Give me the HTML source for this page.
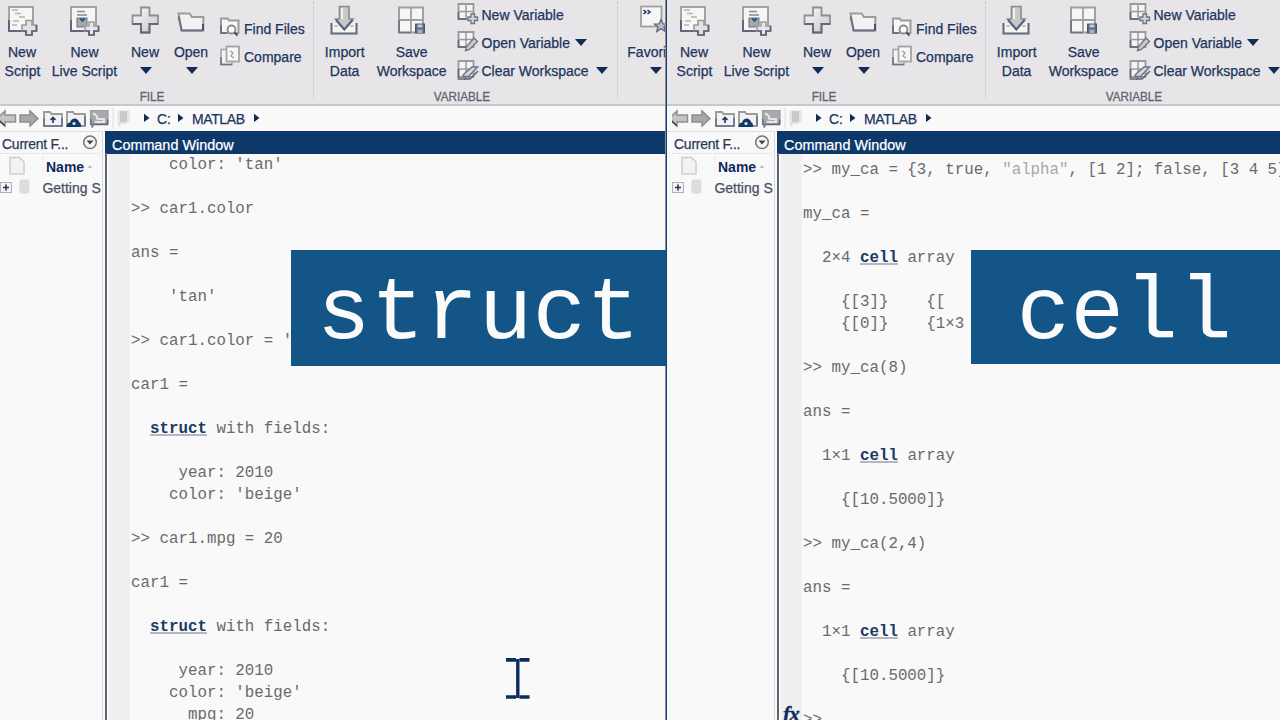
<!DOCTYPE html>
<html><head><meta charset="utf-8">
<style>
*{margin:0;padding:0;box-sizing:border-box}
html,body{width:1280px;height:720px;overflow:hidden;background:#f9f9f9}
body{position:relative;font-family:"Liberation Sans",sans-serif}
.clip{position:absolute;top:0;height:720px;overflow:hidden}
.win{position:absolute;top:0;left:0;width:680px;height:720px}
.a{position:absolute;white-space:nowrap}
.rib{position:absolute;left:-10px;top:0;width:700px;height:104px;background:#e7e5e7}
.ribline{position:absolute;left:-10px;top:104px;width:700px;height:2px;background:#c8c8ca}
.path{position:absolute;left:-10px;top:106px;width:700px;height:25px;background:#f9f9f9}
.lbl{position:absolute;font-size:14px;color:#1c355e;white-space:nowrap;line-height:16px;-webkit-text-stroke:0.25px currentColor}
.c{transform:translateX(-50%)}
.tri{position:absolute;width:0;height:0;border-left:6px solid transparent;border-right:6px solid transparent;border-top:7px solid #0f2d5a}
.grp{position:absolute;font-size:13px;color:#5e6470;line-height:13px;-webkit-text-stroke:0.3px currentColor;transform:translateX(-50%) scaleX(0.9)}
.vsep{position:absolute;top:2px;width:1px;height:98px;border-left:1px dotted #c4c4c4}
.cf{position:absolute;left:-10px;top:131px;width:113px;height:600px;background:#f9f9f9;border-right:1px solid #d8d8d8;border-top:1px solid #e0e0e0}
.cfline{position:absolute;left:0;top:153px;width:100px;height:1px;border-top:1px dotted #d4d4d4}
.cwhdr{position:absolute;left:105px;top:131px;width:575px;height:22.5px;background:#0d386a}
.cwbody{position:absolute;left:105px;top:153px;width:575px;height:580px;background:#f9f9f9}
.gutter{position:absolute;left:109px;top:153px;width:21px;height:580px;background:#efefef}
.cwborder{position:absolute;left:105px;top:153px;width:2px;height:600px;background:#5c6474}
.code{position:absolute;left:131.1px;font-family:"Liberation Mono",monospace;font-size:15.8px;color:#6a6a6a;white-space:pre;line-height:22px}
.kw{color:#1b3a66;font-weight:bold;text-decoration:underline solid #b4b7c0;text-decoration-thickness:1.5px;text-underline-offset:1px}
.ov{position:absolute;background:#135587;color:#fbfbfb;font-family:"Liberation Mono",monospace;font-size:89px;line-height:129px;text-align:center;letter-spacing:0.5px;text-indent:0.5px}
</style></head><body>

<!-- LEFT WINDOW -->
<div class="clip" style="left:0;width:665px">
 <div class="win" id="w1" style="left:0">
  <div class="rib"></div><div class="ribline"></div><div class="path"></div>
  <!-- ribbon labels -->
  <div class="lbl c" style="left:22px;top:44px">New</div>
  <div class="lbl c" style="left:22.5px;top:63px">Script</div>
  <div class="lbl c" style="left:84.5px;top:44px">New</div>
  <div class="lbl c" style="left:84.5px;top:63px">Live Script</div>
  <div class="lbl c" style="left:145px;top:44px">New</div>
  <div class="tri" style="left:139.5px;top:66.5px"></div>
  <div class="lbl c" style="left:191px;top:44px">Open</div>
  <div class="tri" style="left:185.5px;top:66.5px"></div>
  <div class="lbl" style="left:244px;top:21px">Find Files</div>
  <div class="lbl" style="left:244px;top:49px">Compare</div>
  <div class="grp" style="left:152px;top:89.5px">FILE</div>
  <div class="vsep" style="left:313px"></div>
  <div class="lbl c" style="left:344.7px;top:44px">Import</div>
  <div class="lbl c" style="left:344.6px;top:63px">Data</div>
  <div class="lbl c" style="left:411.7px;top:44px">Save</div>
  <div class="lbl c" style="left:411.6px;top:63px">Workspace</div>
  <div class="lbl" style="left:481.5px;top:7px">New Variable</div>
  <div class="lbl" style="left:481.5px;top:34.8px">Open Variable</div>
  <div class="tri" style="left:575px;top:38.5px"></div>
  <div class="lbl" style="left:481.5px;top:63px">Clear Workspace</div>
  <div class="tri" style="left:595.5px;top:66.5px"></div>
  <div class="grp" style="left:462px;top:89.5px">VARIABLE</div>
  <div class="vsep" style="left:617px"></div>
  <div class="lbl" style="left:627.3px;top:44px">Favorites</div>
  <div class="tri" style="left:649.5px;top:66.5px"></div>

  <!-- path bar -->
  <div class="lbl" style="left:157px;top:110.5px;font-size:14px">C:</div>
  <div class="lbl" style="left:192px;top:110.5px;font-size:14px;letter-spacing:-0.4px">MATLAB</div>

  <!-- current folder -->
  <div class="cf"></div>
  <div class="cfline"></div>
  <div class="lbl" style="left:2px;top:135.5px;font-size:14px;letter-spacing:-0.25px;color:#2a3a55">Current F...</div>
  <div class="lbl" style="left:46px;top:159px;font-weight:bold;font-size:14px;color:#10285a;-webkit-text-stroke:0">Name</div>
  <div class="lbl" style="left:42.4px;top:180px;color:#475066">Getting S</div>

  <!-- command window -->
  <div class="cwbody"></div>
  <div class="gutter"></div>
  <div class="cwhdr"></div>
  <div class="cwborder"></div>
  <div class="lbl" style="left:112px;top:136.5px;font-size:14.4px;color:#fff">Command Window</div>

  <svg class="ico" width="700" height="200" viewBox="0 0 700 200" style="position:absolute;left:0;top:0">
   <defs>
    <linearGradient id="gp" x1="0" y1="0" x2="1" y2="1"><stop offset="0" stop-color="#fafafa"/><stop offset="1" stop-color="#c8c8c8"/></linearGradient>
   </defs>
   <!-- New Script -->
   <rect x="9" y="7" width="24" height="24" fill="#f6f6f6" stroke="#a4a4a4" stroke-width="2"/>
   <path d="M9 20V31H22" fill="none" stroke="#5e687c" stroke-width="2"/>
   <path d="M12 10h6M15 13.5h6M19 17h6M13 21h6M12 25h5" stroke="#b4b4b4" stroke-width="1.5"/>
   <path d="M26 20.5h6v4.5h4.5v6h-4.5v4h-6v-4h-4v-6h4z" fill="#e2e2e2" stroke="#9a9a9a" stroke-width="1.6"/><path d="M36.5 25V31H32V35H26V31H22" fill="none" stroke="#56607a" stroke-width="1.7"/>
   <!-- New Live Script -->
   <rect x="71" y="7" width="25" height="24" fill="#f6f6f6" stroke="#a4a4a4" stroke-width="2"/>
   <path d="M71 20V31H84" fill="none" stroke="#5e687c" stroke-width="2"/>
   <path d="M77 11.5h8M77 15h10" stroke="#8a8a8a" stroke-width="1.5"/>
   <rect x="77" y="18" width="10" height="9" fill="#a8a8a8" stroke="#6a7284" stroke-width="1"/>
   <path d="M80 18.5l2.5 2.5l2.5-2.5" fill="#1a5a9a" stroke="#1a5a9a" stroke-width="1.6"/>
   <path d="M89 22h5v4h4.5v5h-4.5v4h-5v-4h-4v-5h4z" fill="#e6e6e6" stroke="#a0a0a0" stroke-width="1.6"/><path d="M98.5 26V31H94V35H89V31H85" fill="none" stroke="#56607a" stroke-width="1.7"/>
   <!-- New plus -->
   <path d="M141 7.5h8.5v8h8.5v8.5h-8.5v8.5h-8.5v-8.5h-8.5v-8.5h8.5z" fill="url(#gp)" stroke="#8e8e8e" stroke-width="1.8"/>
   <path d="M132.5 24h8.5v8.5h8.5V24h8.5" fill="none" stroke="#5e687c" stroke-width="1.8"/>
   <!-- Open folder -->
   <path d="M178.5 13.5h11l2.5 3.5h11.3v13.5h-21.5z" fill="#f2f2f2" stroke="#9c9c9c" stroke-width="2"/>
   <path d="M178.5 16.5l3 14h21.8" fill="none" stroke="#6b7386" stroke-width="1.8"/>
   <path d="M203 24v6" stroke="#1c3a6a" stroke-width="1.5"/>
   <!-- Find Files -->
   <path d="M221 18.5h6.5l1.5 2h9.5v12.5h-17.5z" fill="#f6f6f6" stroke="#9c9c9c" stroke-width="2"/>
   <path d="M221 25v8h6" fill="none" stroke="#6b7386" stroke-width="1.8"/>
   <circle cx="231.5" cy="29.5" r="4" fill="#fafafa" stroke="#8a8a8a" stroke-width="1.8"/>
   <path d="M234.5 32.5l3 3" stroke="#3a4a6a" stroke-width="2"/>
   <!-- Compare -->
   <rect x="221" y="49.5" width="11" height="15" fill="#f4f4f4" stroke="#a8a8a8" stroke-width="1.6"/>
   <path d="M221 57v7.5h11" fill="none" stroke="#6b7386" stroke-width="1.6"/>
   <rect x="226.5" y="46.5" width="12.5" height="15" fill="#f6f6f6" stroke="#a4a4a4" stroke-width="1.8"/>
   <path d="M230 51l3 2-2 3 3 2" fill="none" stroke="#9a9a9a" stroke-width="1.2"/>
   <!-- Import -->
   <path d="M331.5 23v10.5h25v-10.5" fill="#f4f4f4" stroke="#5e687c" stroke-width="2"/>
   <path d="M334 26h4M350 26h4" stroke="#c4c4c4" stroke-width="2"/>
   <path d="M339.5 6.5h9.5v12.5h4l-8.7 10.5l-8.7-10.5h3.9z" fill="#c8c8c8" stroke="#8a8a8a" stroke-width="1.6"/>
   <path d="M336 20l8.3 9.5l8.3-9.5" fill="none" stroke="#56607a" stroke-width="2"/>
   <path d="M342 8v11" stroke="#f2f2f2" stroke-width="2"/>
   <!-- Save Workspace -->
   <path d="M399 7.5h24v25h-24z" fill="#f6f6f6" stroke="#a0a0a0" stroke-width="2"/>
   <path d="M411 7.5v25M399 20h24" stroke="#a0a0a0" stroke-width="1.8"/>
   <path d="M399 20v12.5h12" fill="none" stroke="#6b7386" stroke-width="1.6"/>
   <rect x="415.5" y="24" width="9" height="9" fill="#5e687c" stroke="#4a5670" stroke-width="1"/>
   <rect x="417.5" y="24.5" width="5" height="3" fill="#c8c8c8"/>
   <rect x="417.5" y="29.5" width="5" height="3.5" fill="#a8b0c0"/>
   <!-- New Variable -->
   <path d="M458.5 4h15v15h-15z" fill="#f4f4f4" stroke="#9a9a9a" stroke-width="1.8"/>
   <path d="M466 4v15M458.5 11.5h15" stroke="#9a9a9a" stroke-width="1.5"/>
   <path d="M458.5 12v7h8" fill="none" stroke="#5e687c" stroke-width="1.6"/>
   <path d="M471 14h3.5v3h3v3.5h-3v3h-3.5v-3h-3v-3.5h3z" fill="#d4d4d4" stroke="#6b7386" stroke-width="1.3"/>
   <!-- Open Variable -->
   <path d="M458.5 32h15v15h-15z" fill="#f4f4f4" stroke="#9a9a9a" stroke-width="1.8"/>
   <path d="M466 32v15M458.5 39.5h15" stroke="#9a9a9a" stroke-width="1.5"/>
   <path d="M458.5 40v7h8" fill="none" stroke="#5e687c" stroke-width="1.6"/>
   <path d="M474 38l3.5 3.5l-8 8l-4 1l1-4z" fill="#c8c8c8" stroke="#6b7386" stroke-width="1.3"/>
   <!-- Clear Workspace -->
   <path d="M458.5 61h15v16h-15z" fill="#f4f4f4" stroke="#9a9a9a" stroke-width="1.8"/>
   <path d="M466 61v16M458.5 69h15" stroke="#9a9a9a" stroke-width="1.5"/>
   <path d="M458.5 69v10h8" fill="none" stroke="#5e687c" stroke-width="1.6"/>
   <path d="M463 75l9-8h5.5l-9 9.5h-5.5z" fill="#dadada" stroke="#6b7386" stroke-width="1.5"/>
   <path d="M464 79h6l8-8" fill="none" stroke="#5e687c" stroke-width="1.6"/>
   <!-- Favorites -->
   <rect x="641" y="6.5" width="20.5" height="20" fill="#f6f6f6" stroke="#a0a0a0" stroke-width="1.8"/>
   <path d="M643.5 10l2.5 2-2.5 2M647.5 10l2.5 2-2.5 2" fill="none" stroke="#1b3566" stroke-width="1.6"/>
   <path d="M661 19.5l2 4.5h4.5l-3.5 3l1.3 4.5l-4.3-2.8l-4.3 2.8l1.3-4.5l-3.5-3h4.5z" fill="#bdbdbd" stroke="#56607a" stroke-width="1.2"/>

   <!-- path bar icons -->
   <path d="M-3 118.5l8-7.5v4h10.5v7h-10.5v4z" fill="#c4c4c4" stroke="#8e8e8e" stroke-width="1.5"/>
   <path d="M-2 119.5l7 6.5" stroke="#3a4a6a" stroke-width="1.5"/>
   <path d="M38 118.5l-8-7.5v4h-10v7h10v4z" fill="#a8a8a8" stroke="#8e8e8e" stroke-width="1.5"/>
   <path d="M44 112h6l1.5 2h10.5v12h-18z" fill="#f2f2f2" stroke="#9a9a9a" stroke-width="1.8"/>
   <path d="M44 118v8h18v-8" fill="none" stroke="#6b7386" stroke-width="1.6"/>
   <path d="M53 123v-5M50.5 120l2.5-2.5l2.5 2.5" fill="none" stroke="#1b3a6a" stroke-width="1.6"/>
   <path d="M67 112h6l1.5 2h10.5v12h-18z" fill="#f2f2f2" stroke="#9a9a9a" stroke-width="1.8"/>
   <path d="M85 116v10" stroke="#6b7386" stroke-width="1.6"/>
   <path d="M66.5 127c0-2.8 1.3-4.3 3.5-4.5c0.8-2.6 2.6-4 4.8-4c2.3 0 3.8 1.8 4.3 3.8c1.5 0.3 2 2 2 4.7z" fill="#0f3a6e"/>
   <circle cx="74" cy="123.5" r="1.6" fill="#e8e8e8"/>
   <path d="M90.5 110.5h17.5v13.5h-17.5z" fill="#a9a9a9" stroke="#9c9c9c" stroke-width="1.2"/>
   <path d="M93 113.5c2.5 0.5 4 2.5 4.5 5.5h6.5v3h-9" fill="none" stroke="#e6e6e6" stroke-width="2.2"/>
   <path d="M91 119v5.5h16.5v-5" fill="none" stroke="#5e687c" stroke-width="1.4"/>
   <path d="M93 124l-1 3.5" stroke="#6a7284" stroke-width="2"/>
   <rect x="112.5" y="108" width="1.2" height="21" fill="#e0e0e0"/>
   <path d="M117.5 110.5h12v11.5l-3 2h-6l-3-2z" fill="#e4e4e4"/><path d="M120 111h7v11h-7z" fill="#c8c8c8"/><path d="M118 123l2.5 3.5" stroke="#dcdcdc" stroke-width="1.5"/>
   <path d="M144 113.8l5.5 4.1l-5.5 4.1z" fill="#0f2a55"/>
   <path d="M178 113.8l5.5 4.1l-5.5 4.1z" fill="#0f2a55"/>
   <path d="M254 113.8l5.5 4.1l-5.5 4.1z" fill="#0f2a55"/>

   <!-- current folder icons -->
   <circle cx="90" cy="142.3" r="6.3" fill="#f8f8f8" stroke="#777" stroke-width="1.5"/>
   <path d="M86.5 140.5h7l-3.5 4z" fill="#3a4560"/>
   <path d="M10 157.5h9.5l4.5 4.5v12h-14z" fill="#f2f2f2" stroke="#d0d0d0" stroke-width="1.6"/>
   <rect x="0.5" y="182.5" width="11" height="10" fill="#f4f4f4" stroke="#b0b0b0" stroke-width="1"/>
   <path d="M3 187.5h6M6 184.5v6" stroke="#1b3566" stroke-width="1.6"/>
   <rect x="19.5" y="179.5" width="10" height="14" rx="2" fill="#dcdcdc"/>
   <path d="M87.5 168l2.5-3l2.5 3z" fill="#c0c0c0"/>
   <path d="M43 155v18" stroke="#e2e2e2" stroke-width="1" stroke-dasharray="1 1"/>
  </svg>
</div>
</div>

<div class="a" style="left:665px;top:0;width:2px;height:720px;background:linear-gradient(90deg,#8a909a 0 50%,#133f72 50%)"></div>

<!-- RIGHT WINDOW -->
<div class="clip" style="left:667px;width:613px">
 <div class="win" id="w2" style="left:5px">
  <div class="rib"></div><div class="ribline"></div><div class="path"></div>
  <!-- ribbon labels -->
  <div class="lbl c" style="left:22px;top:44px">New</div>
  <div class="lbl c" style="left:22.5px;top:63px">Script</div>
  <div class="lbl c" style="left:84.5px;top:44px">New</div>
  <div class="lbl c" style="left:84.5px;top:63px">Live Script</div>
  <div class="lbl c" style="left:145px;top:44px">New</div>
  <div class="tri" style="left:139.5px;top:66.5px"></div>
  <div class="lbl c" style="left:191px;top:44px">Open</div>
  <div class="tri" style="left:185.5px;top:66.5px"></div>
  <div class="lbl" style="left:244px;top:21px">Find Files</div>
  <div class="lbl" style="left:244px;top:49px">Compare</div>
  <div class="grp" style="left:152px;top:89.5px">FILE</div>
  <div class="vsep" style="left:313px"></div>
  <div class="lbl c" style="left:344.7px;top:44px">Import</div>
  <div class="lbl c" style="left:344.6px;top:63px">Data</div>
  <div class="lbl c" style="left:411.7px;top:44px">Save</div>
  <div class="lbl c" style="left:411.6px;top:63px">Workspace</div>
  <div class="lbl" style="left:481.5px;top:7px">New Variable</div>
  <div class="lbl" style="left:481.5px;top:34.8px">Open Variable</div>
  <div class="tri" style="left:575px;top:38.5px"></div>
  <div class="lbl" style="left:481.5px;top:63px">Clear Workspace</div>
  <div class="tri" style="left:595.5px;top:66.5px"></div>
  <div class="grp" style="left:462px;top:89.5px">VARIABLE</div>
  <div class="vsep" style="left:617px"></div>
  <div class="lbl" style="left:627.3px;top:44px">Favorites</div>
  <div class="tri" style="left:649.5px;top:66.5px"></div>

  <!-- path bar -->
  <div class="lbl" style="left:157px;top:110.5px;font-size:14px">C:</div>
  <div class="lbl" style="left:192px;top:110.5px;font-size:14px;letter-spacing:-0.4px">MATLAB</div>

  <!-- current folder -->
  <div class="cf"></div>
  <div class="cfline"></div>
  <div class="lbl" style="left:2px;top:135.5px;font-size:14px;letter-spacing:-0.25px;color:#2a3a55">Current F...</div>
  <div class="lbl" style="left:46px;top:159px;font-weight:bold;font-size:14px;color:#10285a;-webkit-text-stroke:0">Name</div>
  <div class="lbl" style="left:42.4px;top:180px;color:#475066">Getting S</div>

  <!-- command window -->
  <div class="cwbody"></div>
  <div class="gutter"></div>
  <div class="cwhdr"></div>
  <div class="cwborder"></div>
  <div class="lbl" style="left:112px;top:136.5px;font-size:14.4px;color:#fff">Command Window</div>

  <svg class="ico" width="700" height="200" viewBox="0 0 700 200" style="position:absolute;left:0;top:0">
   <defs>
    <linearGradient id="gp" x1="0" y1="0" x2="1" y2="1"><stop offset="0" stop-color="#fafafa"/><stop offset="1" stop-color="#c8c8c8"/></linearGradient>
   </defs>
   <!-- New Script -->
   <rect x="9" y="7" width="24" height="24" fill="#f6f6f6" stroke="#a4a4a4" stroke-width="2"/>
   <path d="M9 20V31H22" fill="none" stroke="#5e687c" stroke-width="2"/>
   <path d="M12 10h6M15 13.5h6M19 17h6M13 21h6M12 25h5" stroke="#b4b4b4" stroke-width="1.5"/>
   <path d="M26 20.5h6v4.5h4.5v6h-4.5v4h-6v-4h-4v-6h4z" fill="#e2e2e2" stroke="#9a9a9a" stroke-width="1.6"/><path d="M36.5 25V31H32V35H26V31H22" fill="none" stroke="#56607a" stroke-width="1.7"/>
   <!-- New Live Script -->
   <rect x="71" y="7" width="25" height="24" fill="#f6f6f6" stroke="#a4a4a4" stroke-width="2"/>
   <path d="M71 20V31H84" fill="none" stroke="#5e687c" stroke-width="2"/>
   <path d="M77 11.5h8M77 15h10" stroke="#8a8a8a" stroke-width="1.5"/>
   <rect x="77" y="18" width="10" height="9" fill="#a8a8a8" stroke="#6a7284" stroke-width="1"/>
   <path d="M80 18.5l2.5 2.5l2.5-2.5" fill="#1a5a9a" stroke="#1a5a9a" stroke-width="1.6"/>
   <path d="M89 22h5v4h4.5v5h-4.5v4h-5v-4h-4v-5h4z" fill="#e6e6e6" stroke="#a0a0a0" stroke-width="1.6"/><path d="M98.5 26V31H94V35H89V31H85" fill="none" stroke="#56607a" stroke-width="1.7"/>
   <!-- New plus -->
   <path d="M141 7.5h8.5v8h8.5v8.5h-8.5v8.5h-8.5v-8.5h-8.5v-8.5h8.5z" fill="url(#gp)" stroke="#8e8e8e" stroke-width="1.8"/>
   <path d="M132.5 24h8.5v8.5h8.5V24h8.5" fill="none" stroke="#5e687c" stroke-width="1.8"/>
   <!-- Open folder -->
   <path d="M178.5 13.5h11l2.5 3.5h11.3v13.5h-21.5z" fill="#f2f2f2" stroke="#9c9c9c" stroke-width="2"/>
   <path d="M178.5 16.5l3 14h21.8" fill="none" stroke="#6b7386" stroke-width="1.8"/>
   <path d="M203 24v6" stroke="#1c3a6a" stroke-width="1.5"/>
   <!-- Find Files -->
   <path d="M221 18.5h6.5l1.5 2h9.5v12.5h-17.5z" fill="#f6f6f6" stroke="#9c9c9c" stroke-width="2"/>
   <path d="M221 25v8h6" fill="none" stroke="#6b7386" stroke-width="1.8"/>
   <circle cx="231.5" cy="29.5" r="4" fill="#fafafa" stroke="#8a8a8a" stroke-width="1.8"/>
   <path d="M234.5 32.5l3 3" stroke="#3a4a6a" stroke-width="2"/>
   <!-- Compare -->
   <rect x="221" y="49.5" width="11" height="15" fill="#f4f4f4" stroke="#a8a8a8" stroke-width="1.6"/>
   <path d="M221 57v7.5h11" fill="none" stroke="#6b7386" stroke-width="1.6"/>
   <rect x="226.5" y="46.5" width="12.5" height="15" fill="#f6f6f6" stroke="#a4a4a4" stroke-width="1.8"/>
   <path d="M230 51l3 2-2 3 3 2" fill="none" stroke="#9a9a9a" stroke-width="1.2"/>
   <!-- Import -->
   <path d="M331.5 23v10.5h25v-10.5" fill="#f4f4f4" stroke="#5e687c" stroke-width="2"/>
   <path d="M334 26h4M350 26h4" stroke="#c4c4c4" stroke-width="2"/>
   <path d="M339.5 6.5h9.5v12.5h4l-8.7 10.5l-8.7-10.5h3.9z" fill="#c8c8c8" stroke="#8a8a8a" stroke-width="1.6"/>
   <path d="M336 20l8.3 9.5l8.3-9.5" fill="none" stroke="#56607a" stroke-width="2"/>
   <path d="M342 8v11" stroke="#f2f2f2" stroke-width="2"/>
   <!-- Save Workspace -->
   <path d="M399 7.5h24v25h-24z" fill="#f6f6f6" stroke="#a0a0a0" stroke-width="2"/>
   <path d="M411 7.5v25M399 20h24" stroke="#a0a0a0" stroke-width="1.8"/>
   <path d="M399 20v12.5h12" fill="none" stroke="#6b7386" stroke-width="1.6"/>
   <rect x="415.5" y="24" width="9" height="9" fill="#5e687c" stroke="#4a5670" stroke-width="1"/>
   <rect x="417.5" y="24.5" width="5" height="3" fill="#c8c8c8"/>
   <rect x="417.5" y="29.5" width="5" height="3.5" fill="#a8b0c0"/>
   <!-- New Variable -->
   <path d="M458.5 4h15v15h-15z" fill="#f4f4f4" stroke="#9a9a9a" stroke-width="1.8"/>
   <path d="M466 4v15M458.5 11.5h15" stroke="#9a9a9a" stroke-width="1.5"/>
   <path d="M458.5 12v7h8" fill="none" stroke="#5e687c" stroke-width="1.6"/>
   <path d="M471 14h3.5v3h3v3.5h-3v3h-3.5v-3h-3v-3.5h3z" fill="#d4d4d4" stroke="#6b7386" stroke-width="1.3"/>
   <!-- Open Variable -->
   <path d="M458.5 32h15v15h-15z" fill="#f4f4f4" stroke="#9a9a9a" stroke-width="1.8"/>
   <path d="M466 32v15M458.5 39.5h15" stroke="#9a9a9a" stroke-width="1.5"/>
   <path d="M458.5 40v7h8" fill="none" stroke="#5e687c" stroke-width="1.6"/>
   <path d="M474 38l3.5 3.5l-8 8l-4 1l1-4z" fill="#c8c8c8" stroke="#6b7386" stroke-width="1.3"/>
   <!-- Clear Workspace -->
   <path d="M458.5 61h15v16h-15z" fill="#f4f4f4" stroke="#9a9a9a" stroke-width="1.8"/>
   <path d="M466 61v16M458.5 69h15" stroke="#9a9a9a" stroke-width="1.5"/>
   <path d="M458.5 69v10h8" fill="none" stroke="#5e687c" stroke-width="1.6"/>
   <path d="M463 75l9-8h5.5l-9 9.5h-5.5z" fill="#dadada" stroke="#6b7386" stroke-width="1.5"/>
   <path d="M464 79h6l8-8" fill="none" stroke="#5e687c" stroke-width="1.6"/>
   <!-- Favorites -->
   <rect x="641" y="6.5" width="20.5" height="20" fill="#f6f6f6" stroke="#a0a0a0" stroke-width="1.8"/>
   <path d="M643.5 10l2.5 2-2.5 2M647.5 10l2.5 2-2.5 2" fill="none" stroke="#1b3566" stroke-width="1.6"/>
   <path d="M661 19.5l2 4.5h4.5l-3.5 3l1.3 4.5l-4.3-2.8l-4.3 2.8l1.3-4.5l-3.5-3h4.5z" fill="#bdbdbd" stroke="#56607a" stroke-width="1.2"/>

   <!-- path bar icons -->
   <path d="M-3 118.5l8-7.5v4h10.5v7h-10.5v4z" fill="#c4c4c4" stroke="#8e8e8e" stroke-width="1.5"/>
   <path d="M-2 119.5l7 6.5" stroke="#3a4a6a" stroke-width="1.5"/>
   <path d="M38 118.5l-8-7.5v4h-10v7h10v4z" fill="#a8a8a8" stroke="#8e8e8e" stroke-width="1.5"/>
   <path d="M44 112h6l1.5 2h10.5v12h-18z" fill="#f2f2f2" stroke="#9a9a9a" stroke-width="1.8"/>
   <path d="M44 118v8h18v-8" fill="none" stroke="#6b7386" stroke-width="1.6"/>
   <path d="M53 123v-5M50.5 120l2.5-2.5l2.5 2.5" fill="none" stroke="#1b3a6a" stroke-width="1.6"/>
   <path d="M67 112h6l1.5 2h10.5v12h-18z" fill="#f2f2f2" stroke="#9a9a9a" stroke-width="1.8"/>
   <path d="M85 116v10" stroke="#6b7386" stroke-width="1.6"/>
   <path d="M66.5 127c0-2.8 1.3-4.3 3.5-4.5c0.8-2.6 2.6-4 4.8-4c2.3 0 3.8 1.8 4.3 3.8c1.5 0.3 2 2 2 4.7z" fill="#0f3a6e"/>
   <circle cx="74" cy="123.5" r="1.6" fill="#e8e8e8"/>
   <path d="M90.5 110.5h17.5v13.5h-17.5z" fill="#a9a9a9" stroke="#9c9c9c" stroke-width="1.2"/>
   <path d="M93 113.5c2.5 0.5 4 2.5 4.5 5.5h6.5v3h-9" fill="none" stroke="#e6e6e6" stroke-width="2.2"/>
   <path d="M91 119v5.5h16.5v-5" fill="none" stroke="#5e687c" stroke-width="1.4"/>
   <path d="M93 124l-1 3.5" stroke="#6a7284" stroke-width="2"/>
   <rect x="112.5" y="108" width="1.2" height="21" fill="#e0e0e0"/>
   <path d="M117.5 110.5h12v11.5l-3 2h-6l-3-2z" fill="#e4e4e4"/><path d="M120 111h7v11h-7z" fill="#c8c8c8"/><path d="M118 123l2.5 3.5" stroke="#dcdcdc" stroke-width="1.5"/>
   <path d="M144 113.8l5.5 4.1l-5.5 4.1z" fill="#0f2a55"/>
   <path d="M178 113.8l5.5 4.1l-5.5 4.1z" fill="#0f2a55"/>
   <path d="M254 113.8l5.5 4.1l-5.5 4.1z" fill="#0f2a55"/>

   <!-- current folder icons -->
   <circle cx="90" cy="142.3" r="6.3" fill="#f8f8f8" stroke="#777" stroke-width="1.5"/>
   <path d="M86.5 140.5h7l-3.5 4z" fill="#3a4560"/>
   <path d="M10 157.5h9.5l4.5 4.5v12h-14z" fill="#f2f2f2" stroke="#d0d0d0" stroke-width="1.6"/>
   <rect x="0.5" y="182.5" width="11" height="10" fill="#f4f4f4" stroke="#b0b0b0" stroke-width="1"/>
   <path d="M3 187.5h6M6 184.5v6" stroke="#1b3566" stroke-width="1.6"/>
   <rect x="19.5" y="179.5" width="10" height="14" rx="2" fill="#dcdcdc"/>
   <path d="M87.5 168l2.5-3l2.5 3z" fill="#c0c0c0"/>
   <path d="M43 155v18" stroke="#e2e2e2" stroke-width="1" stroke-dasharray="1 1"/>
  </svg>
</div>
</div>

<!-- LEFT CODE -->
<div class="code" style="top:154px">    color: 'tan'

>> car1.color

ans =

    'tan'

>> car1.color = 'beige'

car1 =

  <span class="kw">struct</span> with fields:

     year: 2010
    color: 'beige'

>> car1.mpg = 20

car1 =

  <span class="kw">struct</span> with fields:

     year: 2010
    color: 'beige'
      mpg: 20</div>

<!-- RIGHT CODE -->
<div class="code" style="left:803.1px;top:158.5px">>> my_ca = {3, true, <span style="color:#a8a8a8">"alpha"</span>, [1 2]; false, [3 4 5]}

my_ca =

  2×4 <span class="kw">cell</span> array

    {[3]}    {[     1]}
    {[0]}    {1×3 double}

>> my_ca(8)

ans =

  1×1 <span class="kw">cell</span> array

    {[10.5000]}

>> my_ca(2,4)

ans =

  1×1 <span class="kw">cell</span> array

    {[10.5000]}

>></div>

<div class="ov" style="left:291px;top:250px;width:375px;height:116px">struct</div>
<div class="ov" style="text-indent:-2px;left:971px;top:250px;width:309px;height:114px">cell</div>

<svg style="position:absolute;left:500px;top:652px" width="36" height="54" viewBox="500 652 36 54">
 <path d="M506 659.9h10M519.5 659.9h10M506 697h10M519.5 697h10" stroke="#0b2c5c" stroke-width="3.6"/>
 <path d="M517.8 659v39" stroke="#0b2c5c" stroke-width="3.4"/>
</svg>
<div class="a" style="left:783px;top:702px;font-family:'Liberation Serif',serif;font-weight:bold;font-style:italic;font-size:21px;line-height:24px;color:#0b2c5c;letter-spacing:-0.8px;-webkit-text-stroke:0.4px #0b2c5c">fx</div>
</body></html>
